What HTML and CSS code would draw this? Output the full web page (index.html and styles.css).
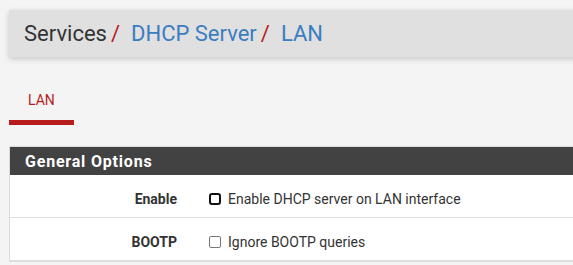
FILE: index.html
```html
<!DOCTYPE html>
<html lang="en">
<head>
    <title>Services: DHCP Server: LAN</title>
    <link rel="stylesheet" href="styles.css">
</head>
<body>
    <div class="breadcrumb">
        <span class="crumb">Services</span><span class="sep">/</span>
        <a class="crumb link" href="#">DHCP Server</a><span class="sep">/</span>
        <a class="crumb link" href="#">LAN</a>
    </div>

    <ul class="tabs">
        <li class="tab active">LAN</li>
    </ul>

    <div class="panel">
        <div class="panel-heading">General Options</div>
        <div class="row">
            <div class="label">Enable</div>
            <label class="field"><input type="checkbox" class="focused"> Enable DHCP server on LAN interface</label>
        </div>
        <div class="row">
            <div class="label">BOOTP</div>
            <label class="field"><input type="checkbox"> Ignore BOOTP queries</label>
        </div>
    </div>
</body>
</html>
```
FILE: styles.css
```css
body {
    margin: 0;
    font-family: Roboto, "Liberation Sans", sans-serif;
    background-color: #f4f4f4;
    color: #333;
    overflow: hidden;
}

.breadcrumb {
    margin: 10px -10px 0 9px;
    height: 47px;
    padding-left: 15px;
    display: flex;
    align-items: center;
    background: #e0e0e0;
    box-shadow: 0 2px 6px rgba(0, 0, 0, 0.18);
    font-size: 22px;
    white-space: nowrap;
}

.crumb {
    color: #333;
    text-decoration: none;
}

.crumb.link {
    color: #3b7dc0;
}

.sep {
    color: #b71c1c;
    margin: 0 11px 0 4px;
}

.tabs {
    list-style: none;
    margin: 35px 0 0 9px;
    padding: 0;
    display: flex;
}

.tab {
    padding: 0 19px 12px;
    font-size: 14px;
    color: #b71c1c;
    border-bottom: 5px solid #b71c1c;
}

.panel {
    margin: 21px -10px 0 9px;
    background: white;
    border: 1px solid #dcdcdc;
}

.panel-heading {
    background: #424242;
    color: white;
    font-weight: bold;
    font-size: 16px;
    letter-spacing: 0.8px;
    height: 28px;
    line-height: 29px;
    padding-left: 15px;
}

.row {
    display: flex;
    align-items: center;
    height: 37px;
    padding-top: 5px;
    border-bottom: 1px solid #e0e0e0;
    font-size: 14px;
}

.label {
    width: 167px;
    text-align: right;
    font-weight: bold;
    color: #333;
}

.field {
    margin-left: 32px;
    display: flex;
    align-items: center;
    color: #333;
}

.field input {
    appearance: none;
    width: 12px;
    height: 12px;
    margin: 1px 7px 0 0;
    border: 1px solid #767676;
    border-radius: 2px;
    background: white;
}

.field input.focused {
    border: 2px solid #111;
    border-radius: 3px;
}
```
